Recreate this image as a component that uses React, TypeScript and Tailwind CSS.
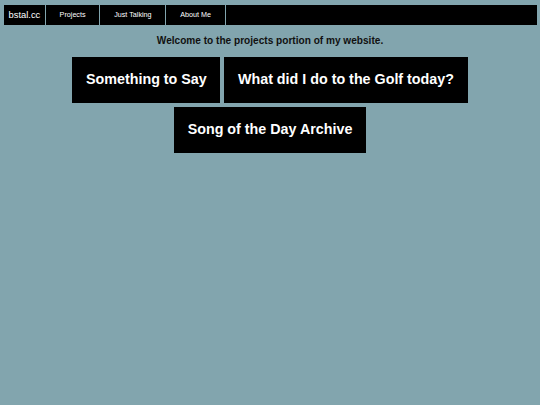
import React from "react";

const navLinks = ["Projects", "Just Talking", "About Me"];
const projects = ["Something to Say", "What did I do to the Golf today?", "Song of the Day Archive"];

export default function App() {
  return (
    <div className="min-h-[405px] w-full bg-[#82a5ae] pt-[5px] font-['Liberation_Sans',Arial,sans-serif]">
      <nav className="mx-[4px] mr-[3px] flex h-[20px] gap-[1px]">
        <div className="flex items-center bg-black px-[4.5px] text-[9.4px] text-white">bstal.cc</div>
        {navLinks.map((l) => (
          <div key={l} className="flex items-center bg-black px-[13.8px] text-[7.2px] text-white">
            {l}
          </div>
        ))}
        <div className="flex-1 bg-black" />
      </nav>
      <h1 className="mt-[10px] text-center text-[10.1px] font-bold leading-[12px] text-[#111]">
        Welcome to the projects portion of my website.
      </h1>
      <div className="mx-auto mt-[10px] flex w-[400px] flex-wrap justify-center gap-[4px]">
        {projects.map((p) => (
          <div
            key={p}
            className="flex h-[46px] items-center bg-black px-[13.6px] text-[14.3px] font-bold text-white"
          >
            {p}
          </div>
        ))}
      </div>
    </div>
  );
}
